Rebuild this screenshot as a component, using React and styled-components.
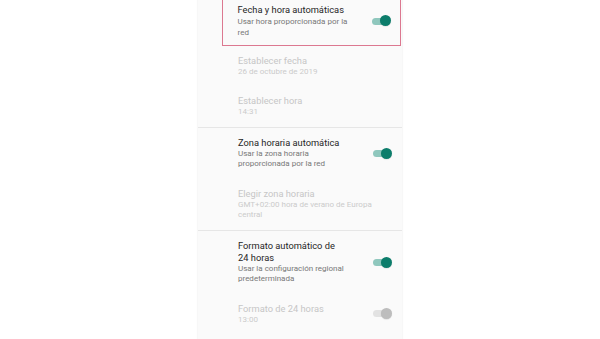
import React from 'react'
import styled, { createGlobalStyle } from 'styled-components'

const GlobalStyle = createGlobalStyle`
  html, body {
    margin: 0;
    padding: 0;
    background: #ffffff;
  }
  body {
    font-family: Roboto, "Noto Sans", "Liberation Sans", sans-serif;
  }
`

const Page = styled.div`
  width: 600px;
  height: 339px;
  overflow: hidden;
  display: flex;
  justify-content: center;
`

const Panel = styled.div`
  width: 204px;
  background: #fafafa;
  box-shadow: -1px 0 1px rgba(0, 0, 0, 0.03), 1px 0 1px rgba(0, 0, 0, 0.03);
  display: flex;
  flex-direction: column;
`

const Group = styled.div`
  display: flex;
  flex-direction: column;
  border-bottom: ${(p) => (p.$last ? 'none' : '1px solid #e6e6e6')};
`

const Highlight = styled.div`
  margin-left: 24px;
  margin-right: 1px;
  border: 1.5px solid #dc7890;
  border-top: none;
  padding-left: 14.5px;
  padding-right: 9px;
  padding-top: 4px;
  padding-bottom: 6.5px;
  display: flex;
  align-items: center;

  & > div > div:first-child {
    margin-bottom: 1px;
  }
`

const Row = styled.div`
  display: flex;
  align-items: center;
  padding: 9px 10px 9px 40px;
`

const Text = styled.div`
  display: flex;
  flex-direction: column;
  width: ${(p) => (p.$widget ? '113px' : '140px')};
  margin-right: auto;
`

const Title = styled.div`
  font-size: 9.3px;
  line-height: 12px;
  white-space: pre-line;
  color: ${(p) => (p.$disabled ? '#c6c6c6' : '#262626')};
`

const Sub = styled.div`
  font-size: 8px;
  line-height: 10.5px;
  color: ${(p) => (p.$disabled ? '#cbcbcb' : '#777777')};
`

const Track = styled.div`
  width: 19px;
  height: 11px;
  display: flex;
  align-items: center;
  justify-content: flex-end;
  position: relative;
  &::before {
    content: '';
    position: absolute;
    left: 0;
    right: 2px;
    top: 2px;
    height: 7px;
    border-radius: 4px;
    background: ${(p) => (p.$off ? '#e2e2e2' : '#8fc7bd')};
  }
`

const Thumb = styled.div`
  width: 11px;
  height: 11px;
  border-radius: 50%;
  position: relative;
  background: ${(p) => (p.$off ? '#bdbdbd' : '#0c7d6b')};
  box-shadow: 0 0.5px 1px rgba(0, 0, 0, 0.15);
`

const Toggle = ({ off }) => (
  <Track $off={off}>
    <Thumb $off={off} />
  </Track>
)

const Pref = ({ title, sub, disabled, widget, off }) => (
  <Row>
    <Text $widget={widget}>
      <Title $disabled={disabled}>{title}</Title>
      {sub && <Sub $disabled={disabled}>{sub}</Sub>}
    </Text>
    {widget && <Toggle off={off} />}
  </Row>
)

export default function App() {
  return (
    <>
      <GlobalStyle />
      <Page>
        <Panel>
          <Group>
            <Highlight>
              <Text $widget>
                <Title>Fecha y hora automáticas</Title>
                <Sub>Usar hora proporcionada por la red</Sub>
              </Text>
              <Toggle />
            </Highlight>
            <Pref title="Establecer fecha" sub="26 de octubre de 2019" disabled />
            <Pref title="Establecer hora" sub="14:31" disabled />
          </Group>
          <Group>
            <Pref
              title="Zona horaria automática"
              sub="Usar la zona horaria proporcionada por la red"
              widget
            />
            <Pref
              title="Elegir zona horaria"
              sub="GMT+02:00 hora de verano de Europa central"
              disabled
            />
          </Group>
          <Group $last>
            <Pref
              title={'Formato automático de\n24 horas'}
              sub="Usar la configuración regional predeterminada"
              widget
            />
            <Pref title="Formato de 24 horas" sub="13:00" disabled widget off />
          </Group>
        </Panel>
      </Page>
    </>
  )
}
